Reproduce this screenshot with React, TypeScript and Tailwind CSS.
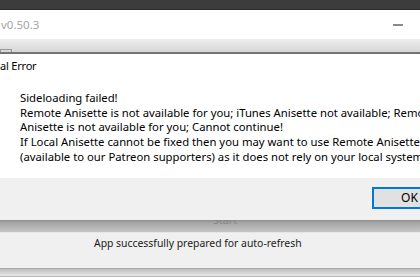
import React from "react";

export default function App() {
  return (
    <div
      className="relative w-[420px] h-[280px] overflow-hidden bg-white"
      style={{ fontFamily: '"Noto Sans", "Open Sans", sans-serif' }}
    >
      {/* top dark bar */}
      <div className="h-[10px] bg-[#3c3c3c] border-b border-[#2b2b2b]" />
      {/* header */}
      <div className="h-[29px] flex items-center justify-between pl-[1px] pr-[17px] bg-white">
        <span className="text-[11.5px] text-[#a6a6a6] leading-none">v0.50.3</span>
        <span className="block w-[10px] h-[2px] bg-[#8a8a8a]" />
      </div>
      {/* gradient toolbar */}
      <div className="relative h-[15px] bg-gradient-to-b from-[#eeeeee] to-[#d6d6d6] border-b-2 border-[#7a7a7a]">
        <div className="absolute left-0 bottom-0 w-[12px] h-[3px] border border-b-0 border-[#9a9a9a]" />
      </div>
      {/* hidden content area */}
      <div className="h-[166px] bg-[#f0f0f0]" />
      {/* start button band */}
      <div className="h-[12px] bg-gradient-to-b from-[#9c9c9c] to-[#c6c6c6] flex justify-center pl-[30px]">
        <span className="text-[11px] leading-none text-[#8a8a8a] -mt-[6px]">Start</span>
      </div>
      {/* status */}
      <div className="h-[36px] bg-[#f0f0f0] flex items-start pt-[3px] pl-[94px] border-t border-[#e6e6e6]">
        <span className="text-[10.4px] leading-[15px] text-[#1a1a1a]">App successfully prepared for auto-refresh</span>
      </div>
      <div className="h-[8px] bg-gradient-to-b from-[#bdbdbd] to-[#e8e8e8] border-t border-[#a8a8a8]" />
      <div className="h-[4px] border-t border-[#b8b8b8] bg-white" />

      {/* dialog overlay */}
      <div className="absolute left-[-60px] top-[54px] w-[540px] h-[166px] bg-white flex flex-col shadow-[0_0_3px_rgba(0,0,0,0.2)]">
        <div className="h-[24px] flex items-start pt-[4px] pl-[60px]">
          <span className="text-[11px] leading-[15px] tracking-[-0.2px] text-black">al Error</span>
        </div>
        <div className="flex-1 pt-[13px] pl-[80px] text-[11.3px] leading-[14.7px] text-black whitespace-nowrap overflow-hidden">
          <div>Sideloading failed!</div>
          <div>Remote Anisette is not available for you; iTunes Anisette not available; Remote</div>
          <div>Anisette is not available for you; Cannot continue!</div>
          <div>If Local Anisette cannot be fixed then you may want to use Remote Anisette</div>
          <div>(available to our Patreon supporters) as it does not rely on your local system.</div>
        </div>
        <div className="h-[42px] bg-[#f0f0f0] flex items-start pt-[9px] pl-[432px]">
          <div className="w-[75px] h-[22px] border-2 border-[#0078d7] bg-[#e1e1e1] flex items-center justify-center">
            <span className="text-[12px] text-black leading-none">OK</span>
          </div>
        </div>
      </div>
    </div>
  );
}
